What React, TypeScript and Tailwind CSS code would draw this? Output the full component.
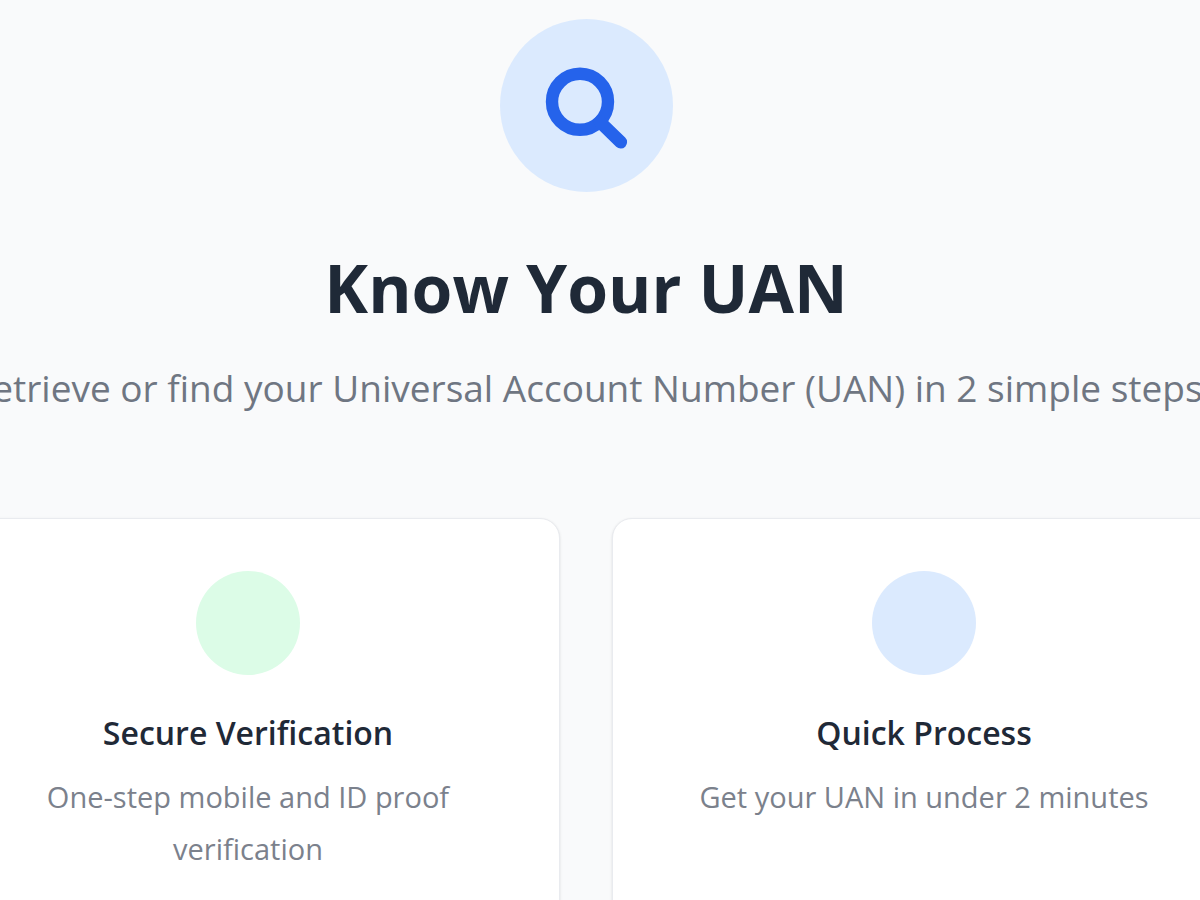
type Feature = { title: string; text: string; tint: string };

const features: Feature[] = [
  {
    title: 'Secure Verification',
    text: 'One-step mobile and ID proof verification',
    tint: 'bg-[#dcfce7]',
  },
  {
    title: 'Quick Process',
    text: 'Get your UAN in under 2 minutes',
    tint: 'bg-[#dbeafe]',
  },
];

function SearchIcon() {
  return (
    <svg viewBox="0 0 173 173" className="size-full" fill="none" stroke="#2563eb" strokeLinecap="round" aria-hidden="true">
      <circle cx="80" cy="82.8" r="28" strokeWidth="12.4" />
      <path d="M100 103 120.7 123.2" strokeWidth="12.8" />
    </svg>
  );
}

function FeatureCard({ title, text, tint }: Feature) {
  return (
    <article className="flex min-w-0 flex-col items-center rounded-[20px] border border-[#e9ebef] bg-white p-[52px] text-center shadow">
      <div className={`size-[104px] rounded-full ${tint}`} />
      <h2 className="mt-8 text-[32px] leading-[52px] font-semibold text-[#1f2937]">{title}</h2>
      <p className="mt-3 text-[29px] leading-[52px] text-[#7b818c]">{text}</p>
    </article>
  );
}

export default function App() {
  return (
    <main className="h-screen overflow-hidden bg-[#f9fafb] font-['Open_Sans','Noto_Sans',sans-serif]">
      <div className="-mr-9 -ml-16 pt-[19px]">
        <header className="flex flex-col items-center text-center">
          <div className="size-[173px] rounded-full bg-[#dbeafe]">
            <SearchIcon />
          </div>
          <h1 className="mt-[52px] text-[66px] leading-[86px] font-bold text-[#1f2937]">Know Your UAN</h1>
          <p className="mt-7 text-[37px] leading-[60px] whitespace-nowrap text-[#6f7682]">
            Retrieve or find your Universal Account Number (UAN) in 2 simple steps
          </p>
        </header>
        <section className="mt-[100px] grid grid-cols-2 gap-[52px]">
          {features.map((feature) => (
            <FeatureCard key={feature.title} {...feature} />
          ))}
        </section>
      </div>
    </main>
  );
}
